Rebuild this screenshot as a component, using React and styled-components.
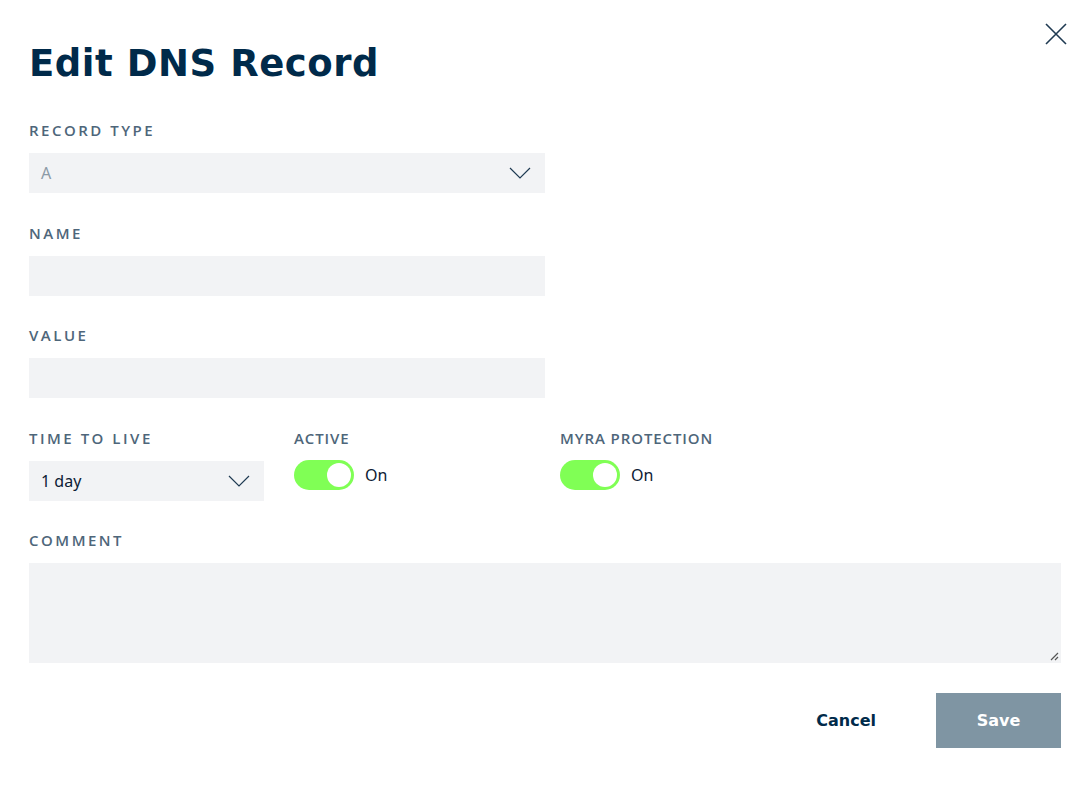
import React from "react";
import styled, { createGlobalStyle } from "styled-components";

const Global = createGlobalStyle`
  html, body { margin: 0; padding: 0; background: #fff; }
  body { font-family: "Noto Sans", "Inter", sans-serif; }
  * { box-sizing: border-box; }
`;

const Dialog = styled.div`
  position: relative;
  width: 1091px;
  height: 787px;
  padding: 38px 30px 0 29px;
  background: #fff;
`;

const Close = styled.button`
  position: absolute;
  top: 22px;
  right: 23px;
  width: 24px;
  height: 24px;
  padding: 0;
  border: 0;
  background: none;
  cursor: pointer;
  display: flex;
`;

const Title = styled.h1`
  margin: 0 0 30px;
  font-family: "DejaVu Sans", sans-serif;
  font-weight: 700;
  font-size: 37px;
  line-height: 52px;
  letter-spacing: 0.55px;
  color: #002a4a;
`;

const Field = styled.div`
  display: flex;
  flex-direction: column;
  width: ${(p) => p.$w || "516px"};
  margin-bottom: ${(p) => p.$mb || "29.5px"};
`;

const Label = styled.label`
  font-family: "Open Sans", sans-serif;
  font-weight: 600;
  font-size: 15px;
  line-height: 20px;
  letter-spacing: ${(p) => (p.$tight ? "0.9px" : "2.5px")};
  color: #4e667a;
  margin-bottom: 13px;
`;

const Box = styled.div`
  height: 40px;
  width: ${(p) => p.$w || "100%"};
  background: #f2f3f5;
  display: flex;
  align-items: center;
  justify-content: space-between;
  padding: 0 14px 0 12px;
  font-size: 16px;
  color: ${(p) => (p.$muted ? "#8c9aa6" : "#0d2034")};
`;

const Row = styled.div`
  display: flex;
  align-items: flex-start;
  margin-bottom: 29.5px;
`;

const Col = styled.div`
  display: flex;
  flex-direction: column;
  width: ${(p) => p.$w};
`;

const ToggleRow = styled.div`
  display: flex;
  align-items: center;
  gap: 11px;
  height: 30px;
  margin-top: -1px;
  font-size: 16px;
  color: #0d2034;
`;

const Track = styled.span`
  position: relative;
  width: 60px;
  height: 30px;
  border-radius: 15px;
  background: #80ff55;
`;

const Knob = styled.span`
  position: absolute;
  top: 3px;
  right: 3px;
  width: 24px;
  height: 24px;
  border-radius: 50%;
  background: #fff;
`;

const Area = styled.div`
  position: relative;
  height: 100px;
  background: #f2f3f5;
`;

const Grip = styled.svg`
  position: absolute;
  right: 2px;
  bottom: 2px;
`;

const Actions = styled.div`
  display: flex;
  justify-content: flex-end;
  align-items: center;
  gap: 60px;
`;

const Btn = styled.button`
  font-family: "DejaVu Sans", sans-serif;
  font-weight: 700;
  font-size: 16px;
  border: 0;
  cursor: pointer;
  height: 55px;
  padding: 0;
  width: ${(p) => (p.$primary ? "125px" : "auto")};
  background: ${(p) => (p.$primary ? "#7f95a3" : "transparent")};
  color: ${(p) => (p.$primary ? "#fff" : "#002a4a")};
`;

const Chevron = () => (
  <svg width="22" height="12" viewBox="0 0 22 12" fill="none">
    <path d="M1 1l10 10L21 1" stroke="#1f3a52" strokeWidth="1.2" />
  </svg>
);

const Toggle = () => (
  <ToggleRow>
    <Track>
      <Knob />
    </Track>
    On
  </ToggleRow>
);

export default function App() {
  return (
    <>
      <Global />
      <Dialog>
        <Close aria-label="Close">
          <svg width="24" height="24" viewBox="0 0 24 24" fill="none">
            <path d="M2 2l20 20M22 2L2 22" stroke="#1f3a52" strokeWidth="1.6" />
          </svg>
        </Close>
        <Title>Edit DNS Record</Title>

        <Field>
          <Label>RECORD TYPE</Label>
          <Box $muted>
            A
            <Chevron />
          </Box>
        </Field>

        <Field>
          <Label>NAME</Label>
          <Box />
        </Field>

        <Field>
          <Label>VALUE</Label>
          <Box />
        </Field>

        <Row>
          <Col $w="265px">
            <Label>TIME TO LIVE</Label>
            <Box $w="235px">
              1 day
              <Chevron />
            </Box>
          </Col>
          <Col $w="266px">
            <Label $tight>ACTIVE</Label>
            <Toggle />
          </Col>
          <Col $w="240px">
            <Label $tight>MYRA PROTECTION</Label>
            <Toggle />
          </Col>
        </Row>

        <Field $w="1032px" $mb="30px">
          <Label>COMMENT</Label>
          <Area>
            <Grip width="9" height="9" viewBox="0 0 9 9">
              <path d="M1 8L8 1M5 8L8 5" stroke="#555" strokeWidth="1.2" />
            </Grip>
          </Area>
        </Field>

        <Actions>
          <Btn>Cancel</Btn>
          <Btn $primary>Save</Btn>
        </Actions>
      </Dialog>
    </>
  );
}
